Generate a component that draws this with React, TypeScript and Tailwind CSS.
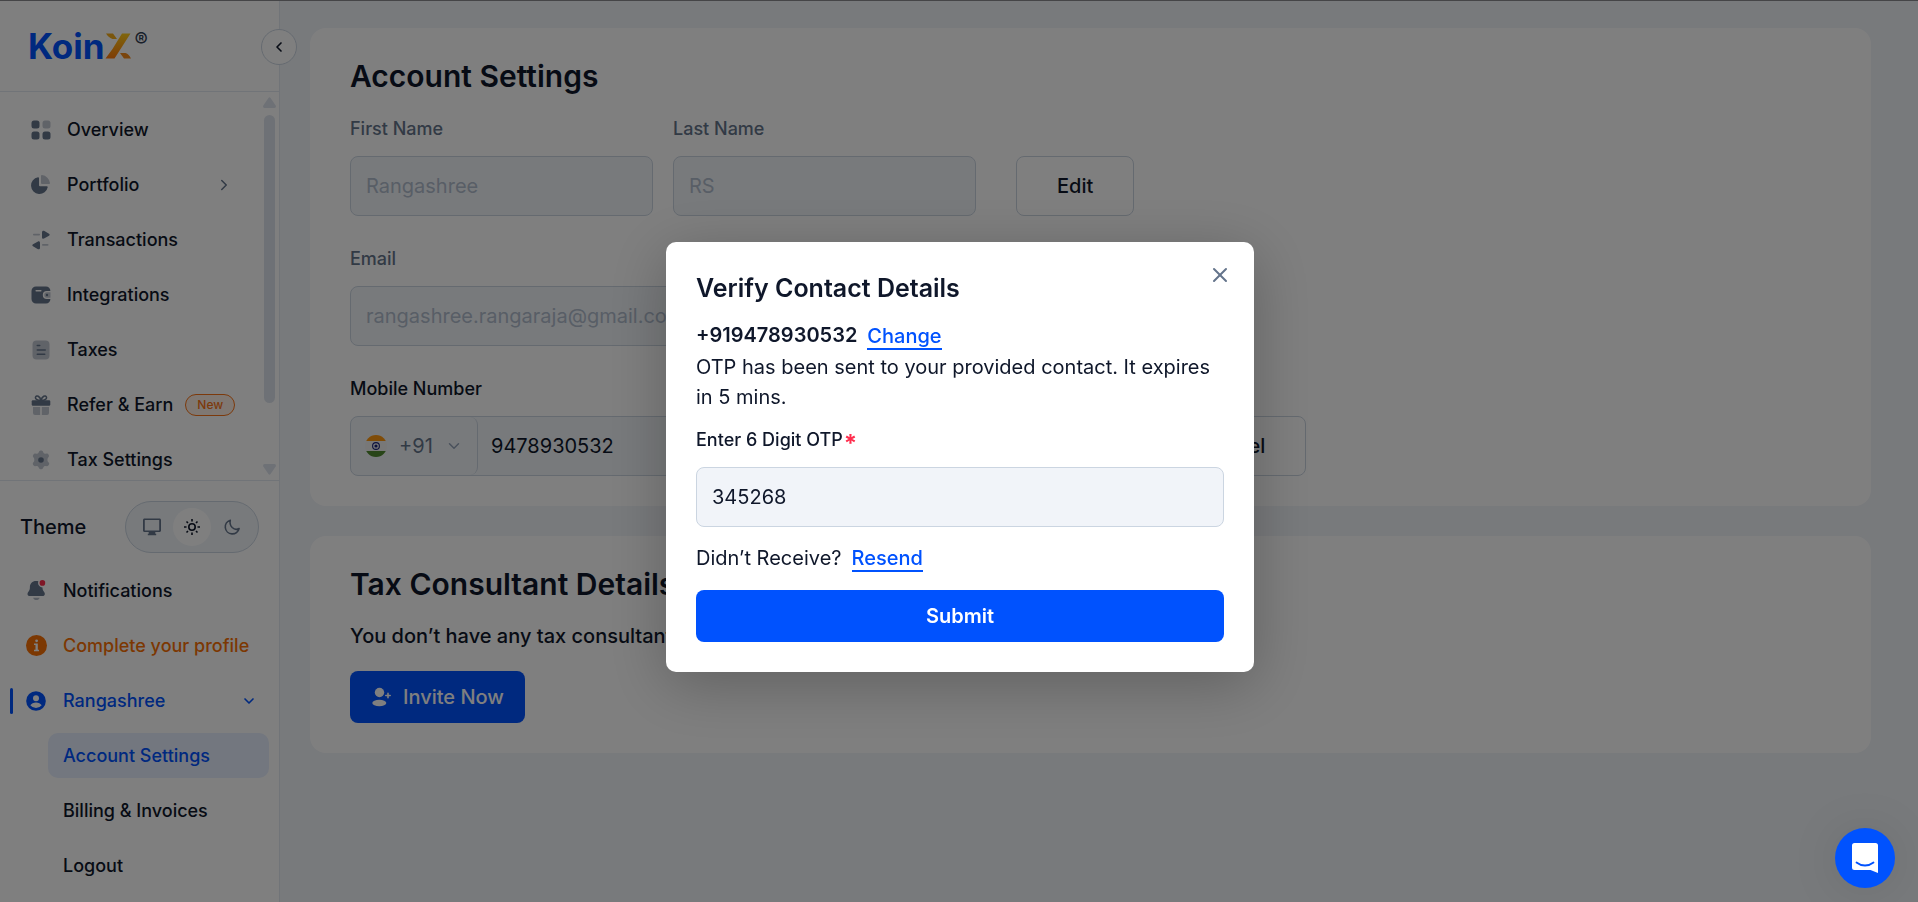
import { useState } from "react";
import type { ReactNode } from "react";
import { ChevronDown, ChevronLeft, ChevronRight, X } from "lucide-react";

interface NavItem {
  label: string;
  icon: ReactNode;
  badge?: string;
  expandable?: boolean;
}

const OverviewIcon = () => (
  <svg viewBox="0 0 20 20" className="size-5 shrink-0" fill="#64748b">
    <rect x="0.5" y="0.5" width="8" height="8" rx="2.5" />
    <rect x="11.5" y="0.5" width="8" height="8" rx="2.5" opacity="0.4" />
    <rect x="0.5" y="11.5" width="8" height="8" rx="2.5" />
    <rect x="11.5" y="11.5" width="8" height="8" rx="2.5" />
  </svg>
);

const PortfolioIcon = () => (
  <svg viewBox="0 0 20 20" className="size-5 shrink-0" fill="#64748b">
    <path d="M8 3.2a.9.9 0 0 0-1-.9 8.4 8.4 0 1 0 9.7 9.9.9.9 0 0 0-.9-1H9a1 1 0 0 1-1-1z" />
    <path d="M10 1a.9.9 0 0 1 1-.9 9 9 0 0 1 8 7.9.9.9 0 0 1-.9 1H11a1 1 0 0 1-1-1z" opacity="0.4" />
  </svg>
);

const TransactionsIcon = () => (
  <svg viewBox="0 0 20 20" className="size-5 shrink-0" fill="#64748b">
    <path d="M11 2.2c0-1.2 1-1.9 2-1.4l5 2.9c.9.5.9 1.5 0 2l-5 2.9c-1 .5-2-.2-2-1.4z" />
    <rect x="2" y="3.8" width="7" height="1.7" rx=".8" opacity="0.4" />
    <path d="M9 12.8c0-1.200-1-1.900-2-1.400l-5 2.900c-.9.5-.9 1.500 0 2l5 2.900c1 .5 2-.2 2-1.400z" />
    <rect x="11" y="14" width="6.5" height="1.7" rx=".8" opacity="0.4" />
  </svg>
);

const IntegrationsIcon = () => (
  <svg viewBox="0 0 20 20" className="size-5 shrink-0" fill="#64748b">
    <path
      d="M5 1.500h10A4.500 4.500 0 0 1 19.400 6h-3.600a4 4 0 0 0 0 8h3.600a4.500 4.500 0 0 1-4.400 4.500H5A4.500 4.500 0 0 1 .5 14V6A4.500 4.500 0 0 1 5 1.500zM5 5a.8.8 0 0 0 0 1.500h5A.8.8 0 0 0 10 5z"
      fillRule="evenodd"
    />
    <path d="M16 7.300h3.500v5.400H16a2.700 2.700 0 0 1 0-5.400z" opacity="0.4" />
    <circle cx="16" cy="10" r="1.2" />
  </svg>
);

const TaxesIcon = () => (
  <svg viewBox="0 0 20 20" className="size-5 shrink-0" fill="#64748b">
    <rect x="1.5" y="0.5" width="17" height="19" rx="4" opacity="0.4" />
    <rect x="5.5" y="4.7" width="4" height="1.6" rx=".8" />
    <rect x="5.5" y="9.2" width="9.5" height="1.6" rx=".8" />
    <rect x="5.5" y="13.5" width="9" height="1.6" rx=".8" />
  </svg>
);

const GiftIcon = () => (
  <svg viewBox="0 0 20 20" className="size-5 shrink-0" fill="#64748b">
    <path
      d="M10 5.500C9 1 5.500-.2 4.600 2c-.7 1.800 1.400 3.500 5.400 3.500zm0 0C11 1 14.500-.2 15.400 2c.7 1.800-1.400 3.500-5.400 3.500z"
      fill="none"
      stroke="#64748b"
      strokeWidth="1.5"
    />
    <rect x="0.7" y="5.3" width="18.6" height="5.4" rx="1.2" />
    <path d="M2 12h7.200v8H4a2 2 0 0 1-2-2zM10.800 12H18v6a2 2 0 0 1-2 2h-5.200z" opacity="0.4" />
  </svg>
);

const SettingsIcon = () => (
  <svg viewBox="0 0 20 20" className="size-5 shrink-0" fill="#64748b">
    <path
      d="M8.200 1.200c.5-1 3.100-1 3.600 0l.8 1.700c.3.500.9.800 1.500.8l1.900-.2c1.100-.1 2.500 2.200 1.900 3.100l-1.100 1.600c-.4.5-.4 2.500 0 3.200l1.300 1.600c.6 1-.9 3.300-2 3.200l-2-.1c-.6 0-1.200.3-1.500.8l-.8 1.700c-.5 1-3.100 1-3.600 0l-.8-1.700c-.3-.5-.9-.8-1.500-.8l-2 .1c-1.100.1-2.600-2.200-2-3.200l1.100-1.600c.4-.5.4-2.500 0-3.200L1.900 6.600C1.400 5.700 2.900 3.400 4 3.500l1.900.2c.6 0 1.200-.3 1.500-.8z"
      opacity="0.4"
    />
    <circle cx="10" cy="10" r="2.8" />
  </svg>
);

const navItems: NavItem[] = [
  { label: "Overview", icon: <OverviewIcon /> },
  { label: "Portfolio", icon: <PortfolioIcon />, expandable: true },
  { label: "Transactions", icon: <TransactionsIcon /> },
  { label: "Integrations", icon: <IntegrationsIcon /> },
  { label: "Taxes", icon: <TaxesIcon /> },
  { label: "Refer & Earn", icon: <GiftIcon />, badge: "New" },
  { label: "Tax Settings", icon: <SettingsIcon /> },
];

const Logo = () => (
  <div className="flex items-center text-[#0052fe]">
    <span className="text-[35px] leading-9 font-bold">Koin</span>
    <svg viewBox="0 0 26 26" className="size-[26px]">
      <defs>
        <linearGradient id="logo-x" x1="0" y1="0" x2="0" y2="1">
          <stop offset="0" stopColor="#ffcc1a" />
          <stop offset="1" stopColor="#ff7a0c" />
        </linearGradient>
      </defs>
      <path d="M17 .5h8.500L9.500 25.500H.5L7.500 16z" fill="url(#logo-x)" />
      <path d="M1 .5h7l4 5.500H7.500C4.500 5 2.500 3 1 .5z" fill="#f5ac1a" />
      <path d="M15 20h5.500c2.500 1 4 2.500 5.500 5.500h-7z" fill="#f58a1a" />
    </svg>
    <span className="mb-3 ml-1 text-xl leading-5 text-[#334155]">®</span>
  </div>
);

function ThemeSwitch() {
  return (
    <div className="flex items-center justify-between px-5">
      <span className="text-xl font-medium">Theme</span>
      <div className="flex h-[52px] items-center gap-px rounded-full border border-[#cbd5e1] bg-[#f1f5f9] px-[6px]">
        <button aria-label="System theme" className="flex size-10 items-center justify-center text-[#64748b]">
          <svg viewBox="0 0 20 20" className="size-5" fill="currentColor">
            <path
              d="M2.500 1.500h15c.8 0 1.500.7 1.500 1.500v10.500c0 .8-.7 1.500-1.500 1.500h-4.200v1.700h.9v1.600H5.800v-1.600h.9V15H2.500C1.700 15 1 14.300 1 13.500V3c0-.8.7-1.500 1.500-1.500zm.3 1.600v10.300h14.400V3.100z"
              fillRule="evenodd"
            />
          </svg>
        </button>
        <button aria-label="Light theme" className="flex size-[38px] items-center justify-center rounded-full bg-white">
          <svg viewBox="0 0 20 20" className="size-5" fill="none" stroke="currentColor" strokeWidth="1.6">
            <circle cx="10" cy="10" r="3.2" />
            <path d="M10 2v2.500M10 15.500V18M2 10h2.500M15.500 10H18M4.500 4.500l1.500 1.500M14 14l1.500 1.500M15.500 4.500 14 6M6 14l-1.500 1.500" />
          </svg>
        </button>
        <button aria-label="Dark theme" className="flex size-10 items-center justify-center text-[#64748b]">
          <svg viewBox="0 0 20 20" className="size-5" fill="none" stroke="currentColor" strokeWidth="1.6" strokeLinejoin="round">
            <path d="M8.300 3.200a7 7 0 1 0 8.800 8.300c-2 1.100-5 .8-6.900-1-1.900-1.900-2.500-4.900-1.900-7.300z" />
          </svg>
        </button>
      </div>
    </div>
  );
}

function Sidebar() {
  return (
    <aside className="relative flex w-[280px] shrink-0 flex-col border-r border-[#e2e8f0] bg-white text-lg font-medium">
      <div className="flex h-[91px] shrink-0 items-center border-b border-[#e2e8f0] pl-7">
        <Logo />
      </div>
      <button
        aria-label="Collapse sidebar"
        className="absolute top-7 -right-[18px] z-10 flex size-9 items-center justify-center rounded-full border border-[#cbd5e1] bg-white"
      >
        <ChevronLeft className="size-4" strokeWidth={2.5} />
      </button>

      <div className="flex min-h-0 flex-1">
        <nav className="flex min-w-0 flex-1 flex-col gap-[10px] overflow-hidden pt-[15px]">
          {navItems.map((item) => (
            <a key={item.label} href="#" className="flex h-[45px] shrink-0 items-center pl-[31px]">
              {item.icon}
              <span className="ml-4">{item.label}</span>
              {item.badge && (
                <span className="ml-3 rounded-full border border-[#f97316] bg-[#fff0e6] px-[11px] text-xs leading-5 text-[#f97316]">
                  {item.badge}
                </span>
              )}
              {item.expandable && <ChevronRight className="mr-[30px] ml-auto size-[18px] text-[#64748b]" />}
            </a>
          ))}
        </nav>
        {/* 스크롤바 */}
        <div className="mr-[3px] flex w-[13px] flex-col items-center py-[5px]">
          <svg viewBox="0 0 12 10" className="h-[11px] w-[13px]" fill="#dde3ec">
            <path d="M5 .8q1-1.300 2 0l4.700 7q.8 2-1 2.200H1.300q-1.800-.2-1-2.200z" />
          </svg>
          <div className="mt-[7px] h-72 w-[11px] rounded-full bg-[#dde3ec]" />
          <svg viewBox="0 0 12 10" className="mt-auto h-[11px] w-[13px]" fill="#dde3ec">
            <path d="M5 9.200q1 1.300 2 0l4.700-7q.8-2-1-2.200H1.300q-1.800.2-1 2.200z" />
          </svg>
        </div>
      </div>

      <div className="shrink-0 border-t border-[#e2e8f0] pt-5 pb-[14px]">
        <ThemeSwitch />
        <div className="mt-[15px] flex flex-col gap-[10px]">
          <a href="#" className="flex h-[45px] items-center gap-4 pl-[26px]">
            <svg viewBox="0 0 20 20" className="size-[21px]" fill="#64748b">
              <path d="M9.500 1C6 1 3.700 3.500 3.700 6.800c0 2-.4 3-1.400 4.300-1.600 2.100-.8 4.200 1.400 4.200h12c2.200 0 3-2.100 1.400-4.200-.9-1.200-1.400-2-1.400-4C12.500 7 10.800 4 11.800 1.300 11 1.100 10.300 1 9.500 1z" />
              <path d="M6.800 16.800h6.200c-.6 3-5.600 3-6.200 0z" opacity="0.5" />
              <circle cx="15.6" cy="2.8" r="2.7" fill="#ff2d4d" />
            </svg>
            Notifications
          </a>
          <a href="#" className="flex h-[45px] items-center gap-4 pl-[26px] text-[#f97005]">
            <svg viewBox="0 0 21 21" className="size-[21px]">
              <circle cx="10.5" cy="10.5" r="10.5" fill="currentColor" />
              <path d="M8 8.500h3.800v6.300H13v1.500H8v-1.500h1.500V10H8z" fill="#fff" />
              <circle cx="10.6" cy="5.8" r="1.4" fill="#fff" />
            </svg>
            Complete your profile
          </a>
          <button className="flex h-[45px] items-center pl-[10px] text-[#0052fe]">
            <span className="h-[26px] w-[3px] rounded-sm bg-[#0052fe]" />
            <svg viewBox="0 0 20 20" className="ml-[13px] size-5">
              <circle cx="10" cy="10" r="9.8" fill="currentColor" />
              <circle cx="10" cy="7.2" r="3" fill="#fff" />
              <path d="M4.300 14.300c1-1.900 3.300-2.900 5.700-2.900s4.700 1 5.700 2.900a7.300 7.300 0 0 1-11.400 0z" fill="#fff" />
            </svg>
            <span className="ml-[17px]">Rangashree</span>
            <ChevronDown className="mr-[22px] ml-auto size-4" strokeWidth={2.5} />
          </button>
          <a href="#" className="mr-[10px] ml-12 flex h-[45px] items-center rounded-[10px] bg-[#e6eefe] pl-[15px] text-[#0052fe]">
            Account Settings
          </a>
          <a href="#" className="flex h-[45px] items-center pl-[63px]">
            Billing &amp; Invoices
          </a>
          <a href="#" className="flex h-[45px] items-center pl-[63px]">
            Logout
          </a>
        </div>
      </div>
    </aside>
  );
}

interface FieldProps {
  id: string;
  label: string;
  placeholder: string;
  className: string;
}

function DisabledField({ id, label, placeholder, className }: FieldProps) {
  return (
    <div className={className}>
      <label htmlFor={id} className="block text-lg leading-7 font-medium text-[#64748b]">
        {label}
      </label>
      <input
        id={id}
        disabled
        placeholder={placeholder}
        className="mt-[13px] block h-[60px] w-full rounded-lg border border-[#cbd5e1] bg-[#f1f5f9] px-[15px] text-xl placeholder:text-[#b0bccd]"
      />
    </div>
  );
}

const IndiaFlag = () => (
  <svg viewBox="0 0 22 22" className="size-[22px]">
    <clipPath id="flag-round">
      <circle cx="11" cy="11" r="11" />
    </clipPath>
    <g clipPath="url(#flag-round)">
      <rect width="22" height="22" fill="#f0f0f0" />
      <rect width="22" height="6" fill="#ff9811" />
      <rect y="16" width="22" height="6" fill="#508a30" />
    </g>
    <circle cx="11" cy="11" r="3.4" fill="none" stroke="#1a237b" strokeWidth="1.1" />
    <circle cx="11" cy="11" r="1.6" fill="#1a237b" />
  </svg>
);

const outlineButton =
  "h-[60px] rounded-lg border border-[#cbd5e1] bg-white px-10 text-xl font-medium";

function SettingsPage() {
  const [mobile, setMobile] = useState("9478930532");

  return (
    <main className="min-w-0 flex-1 overflow-hidden bg-[#f1f4f9] pt-[27px] pr-[47px] pl-[30px]">
      <section className="rounded-2xl bg-white px-10 py-[30px]">
        <h1 className="text-3xl font-semibold">Account Settings</h1>

        <div className="mt-[21px] flex items-end gap-5">
          <DisabledField id="first-name" label="First Name" placeholder="Rangashree" className="w-[303px]" />
          <DisabledField id="last-name" label="Last Name" placeholder="RS" className="w-[303px]" />
          <button className={`ml-5 ${outlineButton}`}>Edit</button>
        </div>

        <div className="mt-[29px] flex">
          <DisabledField
            id="email"
            label="Email"
            placeholder="rangashree.rangaraja@gmail.com"
            className="w-[609px]"
          />
        </div>

        <div className="mt-[29px] flex items-end gap-5">
          <div className="w-[609px]">
            <label htmlFor="mobile" className="block text-lg leading-7 font-medium">
              Mobile Number
            </label>
            <div className="mt-[13px] flex h-[60px] overflow-hidden rounded-lg border border-[#cbd5e1] bg-[#f1f5f9]">
              <button
                aria-label="Country code"
                className="flex w-[127px] items-center rounded-r-lg border-r border-[#cbd5e1] pl-[14px] text-xl text-[#64748b]"
              >
                <IndiaFlag />
                <span className="ml-3">+91</span>
                <ChevronDown className="ml-3 size-[18px] text-[#94a3b8]" />
              </button>
              <input
                id="mobile"
                value={mobile}
                onChange={(e) => setMobile(e.target.value)}
                className="min-w-0 flex-1 px-[13px] text-xl"
              />
            </div>
          </div>
          <button className={outlineButton}>Verify</button>
          <button className={`ml-5 ${outlineButton}`}>Cancel</button>
        </div>
      </section>

      <section className="mt-[30px] rounded-2xl bg-white px-10 py-[30px]">
        <h2 className="text-3xl font-semibold">Tax Consultant Details</h2>
        <p className="mt-[19px] text-xl leading-[30px] font-medium">
          You don’t have any tax consultant added yet.
        </p>
        <button className="mt-5 flex h-[52px] items-center rounded-lg bg-[#0052fe] px-[21px] text-xl font-medium text-white">
          <svg viewBox="0 0 20 20" className="size-5" fill="currentColor">
            <circle cx="8.5" cy="5.5" r="4.7" />
            <ellipse cx="8.3" cy="16" rx="7" ry="3.2" />
            <path d="M17 5.500c.5 0 .8.3.8.8v1.400h1.400a.8.8 0 0 1 0 1.600h-1.400v1.400a.8.8 0 0 1-1.600 0V9.300h-1.400a.8.8 0 0 1 0-1.600h1.400V6.300c0-.5.3-.8.8-.8z" />
          </svg>
          <span className="ml-3">Invite Now</span>
        </button>
      </section>
    </main>
  );
}

function VerifyModal() {
  const [otp, setOtp] = useState("345268");

  return (
    <div className="fixed inset-0 z-20 flex items-center justify-center bg-black/50 pt-[11px] pl-[2px]">
      <div
        role="dialog"
        aria-labelledby="verify-title"
        className="relative w-[588px] rounded-[10px] bg-white p-[30px] text-xl leading-[30px] shadow-[0_12px_60px_rgba(0,0,0,0.25)]"
      >
        <button aria-label="Close" className="absolute top-[21px] right-[22px] text-[#64748b]">
          <X className="size-6" strokeWidth={2} />
        </button>
        <h2 id="verify-title" className="text-[25px] leading-8 font-semibold">
          Verify Contact Details
        </h2>
        <div className="mt-4 flex h-8 items-start gap-[10px]">
          <span className="font-semibold">+919478930532</span>
          <button className="mt-1 border-b-2 border-[#0052fe] leading-6 font-medium text-[#0052fe]">
            Change
          </button>
        </div>
        <p>OTP has been sent to your provided contact. It expires in 5 mins.</p>
        <label htmlFor="otp" className="mt-[14px] flex items-center text-lg leading-7 font-medium">
          Enter 6 Digit OTP
          <span className="ml-px pt-2 text-2xl leading-5 font-bold text-[#ff2d4d]">*</span>
        </label>
        <input
          id="otp"
          value={otp}
          onChange={(e) => setOtp(e.target.value)}
          className="mt-[13px] block h-[60px] w-full rounded-lg border border-[#cbd5e1] bg-[#f1f4f9] px-[15px]"
        />
        <div className="mt-4 flex items-start gap-[10px]">
          <span>Didn’t Receive?</span>
          <button className="mt-[3px] border-b-2 border-[#0052fe] leading-6 font-medium text-[#0052fe]">
            Resend
          </button>
        </div>
        <button className="mt-[17px] block h-[52px] w-full rounded-lg bg-[#0052fe] font-semibold text-white">
          Submit
        </button>
      </div>
    </div>
  );
}

export default function App() {
  return (
    <div className="flex h-screen border-t border-[#8b8b8f] bg-[#f1f4f9] font-['Inter',sans-serif] text-[#0f172a]">
      <Sidebar />
      <SettingsPage />
      <VerifyModal />
      {/* 채팅 버튼 */}
      <button
        aria-label="Open chat"
        className="fixed right-[23px] bottom-[14px] z-30 flex size-[60px] items-center justify-center rounded-full bg-[#0052fe] shadow-[0_2px_50px_rgba(0,0,0,0.1)]"
      >
        <svg viewBox="0 0 28 32" className="h-8 w-7">
          <path d="M3.500 1h21A2.500 2.500 0 0 1 27 3.500V31l-7.500-3h-16A2.500 2.500 0 0 1 1 25.500v-22A2.500 2.500 0 0 1 3.500 1z" fill="#fff" />
          <path d="M5.500 20.500c5 4 12 4 17 0" fill="none" stroke="#0052fe" strokeWidth="1.8" strokeLinecap="round" />
        </svg>
      </button>
    </div>
  );
}
